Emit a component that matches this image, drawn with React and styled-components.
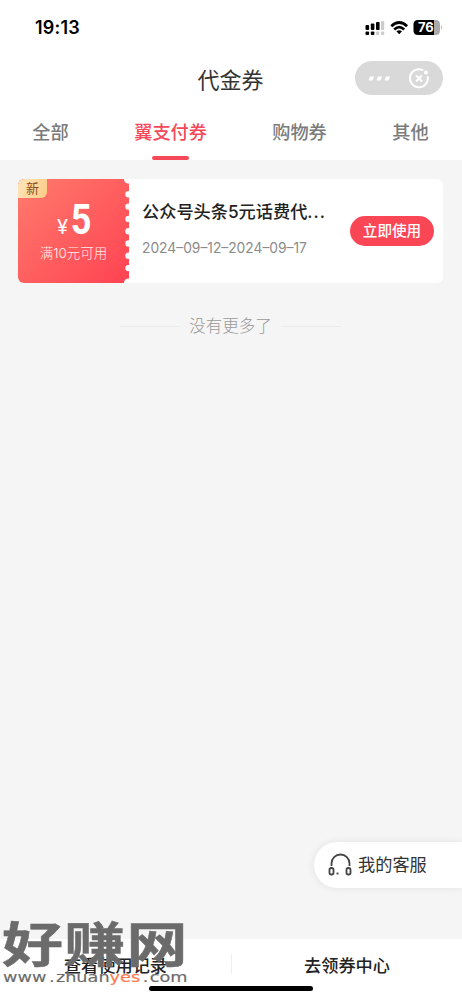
import React from "react";
import styled, { createGlobalStyle } from "styled-components";

const Global = createGlobalStyle`
  * { box-sizing: border-box; }
  body { margin: 0; background: #f5f5f5; font-family: Inter, "Noto Sans CJK SC", sans-serif; }
`;
const Screen = styled.div`
  position: relative;
  width: 462px;
  height: 1000px;
  display: flex;
  flex-direction: column;
  background: #f5f5f5;
  overflow: hidden;
`;
const Header = styled.header`
  height: 160px;
  background: #fff;
  display: flex;
  flex-direction: column;
`;
const StatusBar = styled.div`
  height: 56px;
  padding: 0 20px 0 35px;
  display: flex;
  justify-content: space-between;
`;
const Clock = styled.span`
  font: 600 18px/56px Inter, sans-serif;
  color: #000;
  letter-spacing: 0.2px;
`;
const StatusIcons = styled.svg`
  width: 80px;
  height: 20px;
  margin-top: 18px;
`;
const TitleBar = styled.div`
  height: 48px;
  display: grid;
  grid-template-columns: 1fr auto 1fr;
  align-items: center;
  padding-right: 19px;
  padding-left: 18px;
`;
const Title = styled.h1`
  grid-column: 2;
  margin: 0;
  font-size: 22px;
  font-weight: 400;
  line-height: 48px;
  color: #333;
`;
const Capsule = styled.svg`
  width: 88px;
  height: 34px;
  justify-self: end;
  margin-top: -4px;
`;
const Tabs = styled.nav`
  height: 56px;
  padding: 0 33px 0 32px;
  display: flex;
  justify-content: space-between;
`;
const Tab = styled.div`
  height: 56px;
  display: flex;
  flex-direction: column;
  align-items: center;
  justify-content: space-between;
  font-size: 18.2px;
  line-height: 56px;
  font-weight: 500;
  color: ${(p) => (p.$active ? "#f5495a" : "#7b7b7b")};
  &::after {
    content: "";
    width: 37px;
    height: 4px;
    flex: none;
    margin-top: -4px;
    border-radius: 2px;
    background: ${(p) => (p.$active ? "#f5495a" : "transparent")};
  }
`;
const Content = styled.main`
  flex: 1;
  padding: 19px 19px 0 18px;
`;
const Card = styled.article`
  position: relative;
  height: 104px;
  display: flex;
  background: #fff;
  border-radius: 6px;
  overflow: hidden;
`;
const Amount = styled.div`
  width: 111px;
  padding: 20px 0 0;
  display: flex;
  flex-direction: column;
  align-items: center;
  color: #fff;
  background: linear-gradient(135deg, #ff7b6d, #ff4352);
`;
const Price = styled.div`
  height: 42px;
  display: flex;
  align-items: baseline;
  gap: 1px;
  line-height: 42px;
  padding-left: 3px;
`;
const Yen = styled.span`
  font-size: 20px;
  font-weight: 400;
`;
const Value = styled.span`
  font: 700 42px/42px "Roboto", sans-serif;
  transform: scaleX(0.86);
`;
const Condition = styled.div`
  font-size: 13.5px;
  line-height: 24px;
  font-weight: 300;
  opacity: 0.9;
`;
const Badge = styled.div`
  position: absolute;
  left: 0;
  top: 0;
  width: 29px;
  height: 19px;
  text-align: center;
  font-size: 13px;
  line-height: 19px;
  color: #8f4a13;
  background: linear-gradient(110deg, #ffe6bd, #fccb85);
  border-radius: 6px 0 6px 0;
`;
const Notches = styled.svg`
  position: absolute;
  left: 104px;
  top: 0;
  width: 12px;
  height: 104px;
`;
const Info = styled.div`
  flex: 1;
  padding: 20px 0 0 13px;
`;
const Name = styled.div`
  font-size: 17.2px;
  line-height: 26px;
  font-weight: 500;
  color: #222;
  white-space: nowrap;
`;
const Ellipsis = styled.span`
  letter-spacing: 1px;
`;
const Dates = styled.div`
  margin-top: 13px;
  font-size: 13.8px;
  line-height: 20px;
  color: #8b8b8b;
  white-space: nowrap;
`;
const UseButton = styled.button`
  align-self: center;
  width: 84px;
  height: 30px;
  margin-right: 9px;
  padding: 0;
  border: 0;
  border-radius: 15px;
  background: #fb4656;
  color: #fff;
  font: 500 14.6px/30px Inter, "Noto Sans CJK SC", sans-serif;
`;
const EndNote = styled.div`
  margin-top: 31px;
  display: flex;
  align-items: center;
  justify-content: center;
  gap: 9px;
  font-size: 16.5px;
  line-height: 24px;
  font-weight: 300;
  color: #999;
  &::before, &::after {
    content: "";
    width: 60px;
    height: 1px;
    background: #ececec;
  }
`;
const Service = styled.div`
  position: absolute;
  right: 0;
  top: 842px;
  width: 148px;
  height: 46px;
  padding: 0 0 3px 14px;
  display: flex;
  align-items: center;
  gap: 5px;
  border-radius: 23px 0 0 23px;
  background: #fff;
  box-shadow: 0 0 8px rgba(0, 0, 0, 0.08);
  font-size: 17.2px;
  color: #333;
`;
const Footer = styled.footer`
  height: 61px;
  background: #fff;
  display: flex;
`;
const FooterLink = styled.div`
  flex: 1;
  text-align: center;
  font-size: 17.2px;
  line-height: 53px;
  font-weight: 500;
  color: #222;
  & + &::before {
    content: "";
    float: left;
    width: 1px;
    height: 20px;
    margin-top: 15px;
    background: #eee;
  }
`;
const HomeBar = styled.div`
  position: absolute;
  left: 149px;
  top: 986px;
  width: 164px;
  height: 5px;
  border-radius: 3px;
  background: #000;
`;
const Watermark = styled.div`
  position: absolute;
  left: 2px;
  top: 921px;
  width: 190px;
  height: 70px;
  color: #6b6b6b;
`;
const Brand = styled.div`
  height: 48px;
  font-size: 48px;
  line-height: 48px;
  font-weight: 700;
  letter-spacing: 1px;
  white-space: nowrap;
  transform: scaleX(1.27);
  transform-origin: 0 0;
  -webkit-text-stroke: 0.5px currentColor;
`;
const Site = styled.div`
  font: 400 13.6px/16px "DejaVu Sans", sans-serif;
  white-space: nowrap;
  transform: scaleX(1.3);
  transform-origin: 0 0;
  margin-left: 1px;
  display: flex;
  -webkit-text-stroke: 0.15px currentColor;
  em { font-style: normal; color: #ff7852; }
  i { font-style: normal; padding: 0 1px 0 2px; }
`;

export default function App() {
  return (
    <Screen>
      <Global />
      <Header>
        <StatusBar>
          <Clock>19:13</Clock>
          <StatusIcons viewBox="362 18 80 20">
            <g>
              <rect x="365.500" y="25" width="3.600" height="5" rx="1" />
              <rect x="370.800" y="23.500" width="3.600" height="6.500" rx="1" />
              <rect x="376" y="22" width="3.600" height="8" rx="1" />
              <rect x="381" y="21" width="3.200" height="9" rx="1" fill="#ccc" />
              <rect x="365.500" y="31.500" width="3.600" height="3.500" rx="1" />
              <rect x="370.800" y="31.500" width="3.600" height="3.500" rx="1" />
              <rect x="376" y="31.500" width="3.200" height="3.500" rx="1" fill="#ccc" />
              <rect x="381" y="31.500" width="3.200" height="3.500" rx="1" fill="#ccc" />
            </g>
            <g fill="none" stroke="#000" strokeWidth="2.700">
              <path d="M391.300 26.200Q399.200 18.800 407.100 26.200" />
              <path d="M394.200 29.400Q399.200 24.800 404.200 29.400" />
            </g>
            <path d="M396.400 31.300Q399.200 29.200 402 31.300L399.200 34.200Z" />
            <path d="M418 20H434V35H418Q413.500 35 413.500 30.500V24.500Q413.500 20 418 20Z" />
            <path d="M434 20H436Q440 20 440 24.500V30.500Q440 35 436 35H434Z" fill="#aaa" />
            <path d="M441 25.500Q444 27.500 441 29.500Z" fill="#bbb" />
            <text x="418" y="32.300" fill="#fff" fontFamily="Inter" fontWeight="700" fontSize="13">76</text>
          </StatusIcons>
        </StatusBar>
        <TitleBar>
          <Title>代金券</Title>
          <Capsule viewBox="0 0 88 34">
            <rect width="88" height="34" rx="17" fill="#d9d9d9" />
            <g fill="#fff">
              <path d="M15 15.500H19L17.500 19.500H13.500Z" />
              <path d="M23 15.500H27L25.500 19.500H21.500Z" />
              <path d="M31 15.500H35L33.500 19.500H29.500Z" />
              <circle cx="71" cy="11.500" r="2" />
            </g>
            <g fill="none" stroke="#fff" strokeLinecap="round">
              <path d="M67.500 9A9 9 0 1 0 72.800 16" strokeWidth="2" />
              <path d="M61.500 15L66.500 20M66.500 15L61.500 20" strokeWidth="2" />
            </g>
          </Capsule>
        </TitleBar>
        <Tabs>
          <Tab>全部</Tab>
          <Tab $active>翼支付券</Tab>
          <Tab>购物券</Tab>
          <Tab>其他</Tab>
        </Tabs>
      </Header>
      <Content>
        <Card>
          <Amount>
            <Price><Yen>¥</Yen><Value>5</Value></Price>
            <Condition>满10元可用</Condition>
          </Amount>
          <Badge>新</Badge>
          <Notches viewBox="0 0 12 104" fill="#fff">
            <circle cx="6.500" cy="0" r="4.600" />
            {[15.3, 27.6, 39.9, 52.2, 64.500, 76.8, 89.1].map((y) => (
              <circle key={y} cx="6.500" cy={y} r="3.200" />
            ))}
            <circle cx="6.500" cy="104" r="4.600" />
          </Notches>
          <Info>
            <Name>公众号头条5元话费代<Ellipsis>...</Ellipsis></Name>
            <Dates>2024–09–12–2024–09–17</Dates>
          </Info>
          <UseButton>立即使用</UseButton>
        </Card>
        <EndNote>没有更多了</EndNote>
      </Content>
      <Footer>
        <FooterLink>查看使用记录</FooterLink>
        <FooterLink>去领券中心</FooterLink>
      </Footer>
      <Service>
        <svg width="25" height="26" viewBox="0 0 25 26" fill="none" stroke="#444" strokeWidth="1.800">
          <path d="M3.500 15V12.500A9 9 0 0 1 21.500 12.500V15" />
          <rect x="1.500" y="17" width="4" height="6.500" rx="1.800" />
          <rect x="18.500" y="17" width="4" height="6.500" rx="1.800" />
          <path d="M8.500 22.500H10.500" />
        </svg>
        我的客服
      </Service>
      <HomeBar />
      <Watermark>
        <Brand>好赚网</Brand>
        <Site>www<i>.</i>zhuan<em>yes</em><i>.</i>com</Site>
      </Watermark>
    </Screen>
  );
}
